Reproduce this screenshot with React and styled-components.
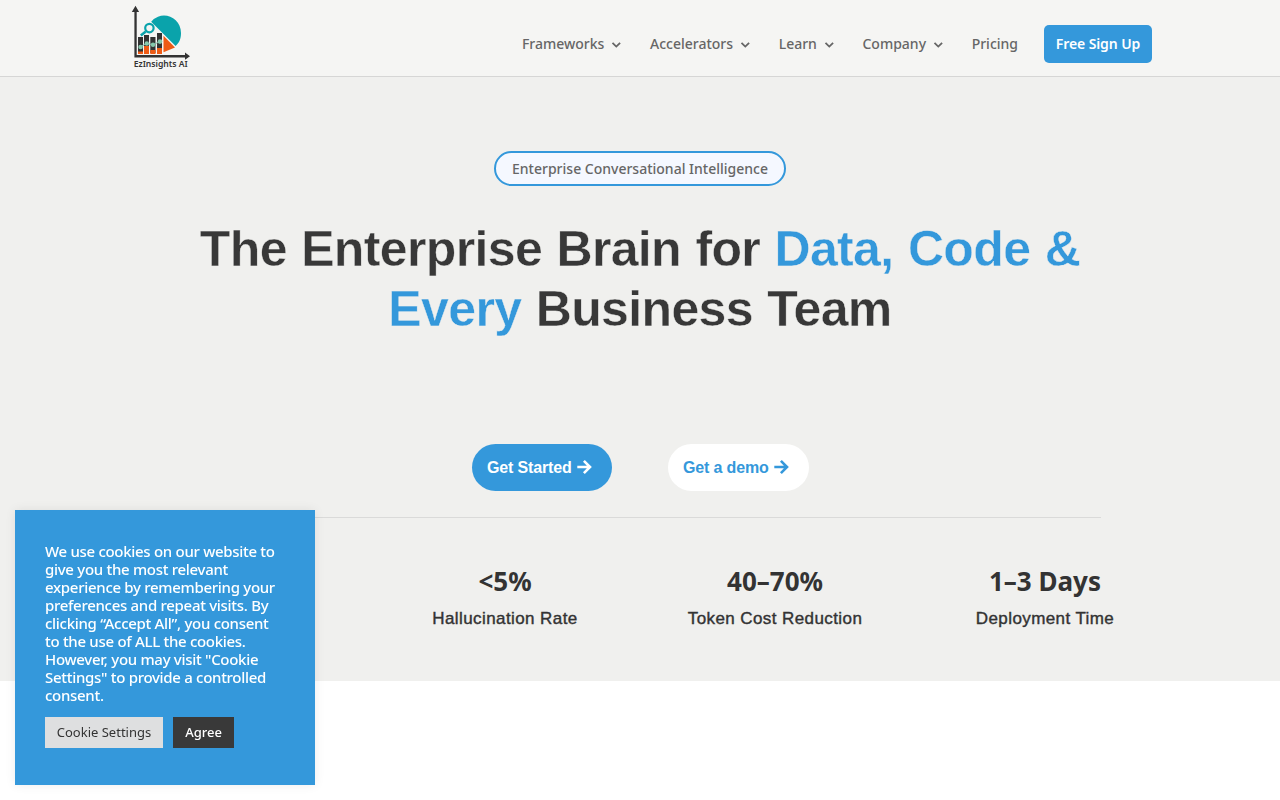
import React from "react";
import styled, { createGlobalStyle } from "styled-components";

const GlobalStyle = createGlobalStyle`
  * {
    box-sizing: border-box;
  }

  body {
    margin: 0;
    height: 800px;
    overflow: hidden;
    background: #ffffff;
    font-family: "Noto Sans", sans-serif;
    color: #666666;
  }
`;

const Header = styled.header`
  height: 77px;
  padding: 0 128px;
  display: flex;
  justify-content: space-between;
  background: #f5f5f3;
  border-bottom: 1px solid #d6d6d5;
`;

const Logo = styled.svg`
  width: 66px;
  height: 76px;
  display: block;
`;

const Nav = styled.nav`
  display: flex;
  align-items: center;
  height: 38px;
  margin-top: 25px;
`;

const NavLink = styled.a`
  display: flex;
  align-items: center;
  margin-right: ${(props) => props.$gap};
  font-size: 14px;
  font-weight: 500;
  line-height: 20px;
  white-space: nowrap;
  color: #666666;

  svg {
    margin: 2px 0 0 7px;
  }
`;

const SignUp = styled.a`
  width: 108px;
  height: 38px;
  border-radius: 5px;
  background: #3498db;
  color: #ffffff;
  font-size: 14px;
  font-weight: 600;
  line-height: 38px;
  letter-spacing: -0.1px;
  text-align: center;
`;

const Hero = styled.section`
  height: 604px;
  padding-top: 74px;
  display: flex;
  flex-direction: column;
  align-items: center;
  background: #f0f0ee;
`;

const Badge = styled.div`
  width: 292px;
  height: 35px;
  border: 2px solid #3498db;
  border-radius: 50px;
  background: #f5f8ff;
  font-size: 14px;
  font-weight: 500;
  line-height: 32px;
  text-align: center;
  white-space: nowrap;
`;

const Title = styled.h1`
  width: 920px;
  margin: 33px 0 0;
  font-family: "Liberation Sans", sans-serif;
  font-size: 50px;
  font-weight: 700;
  line-height: 60px;
  letter-spacing: -0.64px;
  word-spacing: 1.1px;
  text-align: center;
  color: #383838;
  /* trims the bold down to a semibold */
  -webkit-text-stroke: 0.4px #f0f0ee;

  span {
    color: #3498db;
  }
`;

const Actions = styled.div`
  display: flex;
  gap: 56px;
  margin-top: 105px;
`;

const ActionButton = styled.a`
  display: flex;
  align-items: center;
  width: ${(props) => (props.$light ? "141px" : "140px")};
  height: 47px;
  padding-left: 15.4px;
  border-radius: 25px;
  font-family: "Liberation Sans", sans-serif;
  font-size: 16px;
  font-weight: 600;
  letter-spacing: -0.14px;
  white-space: nowrap;
  background: ${(props) => (props.$light ? "#ffffff" : "#3498db")};
  color: ${(props) => (props.$light ? "#3498db" : "#ffffff")};

  svg {
    margin: -1px 0 0 5px;
  }
`;

const Stats = styled.div`
  width: 921px;
  margin-top: 26px;
  padding-top: 44px;
  border-top: 1px solid #dadad9;
  display: grid;
  grid-template-columns: repeat(4, 270px);
  justify-content: center;
`;

const Stat = styled.div`
  text-align: center;
  color: #333333;

  &:first-child {
    grid-column-start: 2;
  }
`;

const StatNumber = styled.div`
  font-size: 26px;
  font-weight: 700;
  line-height: 38px;
`;

const StatLabel = styled.div`
  margin-top: 7px;
  font-family: "Liberation Sans", sans-serif;
  font-size: 17px;
  font-weight: 400;
  line-height: 24px;
  letter-spacing: 0.41px;
  -webkit-text-stroke: 0.4px #333333;
`;

const CookieBox = styled.aside`
  position: fixed;
  left: 15px;
  bottom: 15px;
  width: 300px;
  height: 275px;
  padding: 32px 30px 0;
  background: #3498db;
  box-shadow: 0 0 10px rgba(0, 0, 0, 0.08);
  color: #ffffff;
`;

const CookieText = styled.p`
  margin: 0;
  font-size: 15px;
  font-weight: 500;
  line-height: 18px;
  letter-spacing: -0.3px;
`;

const CookieActions = styled.div`
  display: flex;
  gap: 10px;
  margin-top: 13px;
`;

const CookieButton = styled.button`
  height: 31px;
  width: ${(props) => (props.$dark ? "61px" : "118px")};
  padding: 0 0 2px;
  border: none;
  font-family: inherit;
  font-size: 13px;
  font-weight: ${(props) => (props.$dark ? 500 : 400)};
  white-space: nowrap;
  background: ${(props) => (props.$dark ? "#393939" : "#dedfe0")};
  color: ${(props) => (props.$dark ? "#ffffff" : "#333333")};
`;

const links = [
  { label: "Frameworks", menu: true },
  { label: "Accelerators", menu: true },
  { label: "Learn", menu: true },
  { label: "Company", menu: true },
  { label: "Pricing", menu: false },
];

const stats = [
  { number: "<5%", label: "Hallucination Rate" },
  { number: "40–70%", label: "Token Cost Reduction" },
  { number: "1–3 Days", label: "Deployment Time" },
];

const Chevron = () => (
  <svg width="11" height="8" viewBox="0 0 11 8" fill="none">
    <path d="M1.5 1.8l3.8 3.8L9.1 1.8" stroke="#666666" strokeWidth="1.8" />
  </svg>
);

const Arrow = () => (
  <svg width="15" height="16" viewBox="0 0 15 16" fill="none">
    <path d="M0.3 8h12.4M6.9 1.9L13 8l-6.1 6.1" stroke="currentColor" strokeWidth="2.6" />
  </svg>
);

const BrandLogo = () => (
  <Logo viewBox="0 0 66 76">
    <path d="M23.2 21.8A15.6 15.6 0 0 1 30 16.8C40 12.5 53 20 53 33C53 39 51 43 47.6 46Z" fill="#0aa3ab" />
    <path d="M35.5 35.8L47 47.4L35.5 52.3Z" fill="#ee5b15" />
    <g fill="#333333">
      <path d="M10 37h5v16h-5zM16 35h5v18h-5zM22.3 37h5.2v16h-5.2zM29 33h5v20h-5z" />
      <path d="M6.4 10h2.3v45h49.8v2.4h-52.1z" />
      <path d="M3.8 12L7.5 5.7l3.6 6.3zM57 52.5l5 3.7-5 3.6z" />
    </g>
    <path d="M10 51.5h5V54h-5zM16 46h5v8h-5zM22.3 50h5.2v4h-5.2zM29 48h5v6h-5z" fill="#ee5b15" />
    <path d="M12 47l6.5-3.5L25 44.7l7-3.2" fill="none" stroke="#86b8a5" strokeWidth="1" />
    <g fill="#86c9ad">
      <circle cx="12.6" cy="47" r="2.3" />
      <circle cx="18.8" cy="43.5" r="2.2" />
      <circle cx="25" cy="44.8" r="2.2" />
      <circle cx="32" cy="41.6" r="2.3" />
    </g>
    <circle cx="21.4" cy="28.1" r="4.2" fill="#f5f5f3" stroke="#0aa3ab" strokeWidth="2.2" />
    <path d="M17.8 31.4l-5 4" stroke="#0aa3ab" strokeWidth="2.5" />
    <text
      x="5.7"
      y="67"
      fontFamily="Noto Sans, sans-serif"
      fontSize="8.7"
      fontWeight="600"
      fill="#333333"
      textLength="54"
      lengthAdjust="spacingAndGlyphs"
    >
      EzInsights AI
    </text>
  </Logo>
);

const App = () => {
  return (
    <>
      <GlobalStyle />
      <Header>
        <BrandLogo />
        <Nav>
          {links.map((link) => (
            <NavLink key={link.label} $gap={link.menu ? "27.6px" : "26px"}>
              {link.label}
              {link.menu && <Chevron />}
            </NavLink>
          ))}
          <SignUp>Free Sign Up</SignUp>
        </Nav>
      </Header>

      <Hero>
        <Badge>Enterprise Conversational Intelligence</Badge>
        <Title>
          The Enterprise Brain for <span>Data, Code &amp; Every</span> Business Team
        </Title>
        <Actions>
          <ActionButton>
            Get Started <Arrow />
          </ActionButton>
          <ActionButton $light>
            Get a demo <Arrow />
          </ActionButton>
        </Actions>
        <Stats>
          {stats.map((stat) => (
            <Stat key={stat.label}>
              <StatNumber>{stat.number}</StatNumber>
              <StatLabel>{stat.label}</StatLabel>
            </Stat>
          ))}
        </Stats>
      </Hero>

      <CookieBox>
        <CookieText>
          We use cookies on our website to give you the most relevant experience by remembering your
          preferences and repeat visits. By clicking “Accept All”, you consent to the use of ALL the
          cookies. However, you may visit "Cookie Settings" to provide a controlled consent.
        </CookieText>
        <CookieActions>
          <CookieButton>Cookie Settings</CookieButton>
          <CookieButton $dark>Agree</CookieButton>
        </CookieActions>
      </CookieBox>
    </>
  );
};

export default App;
